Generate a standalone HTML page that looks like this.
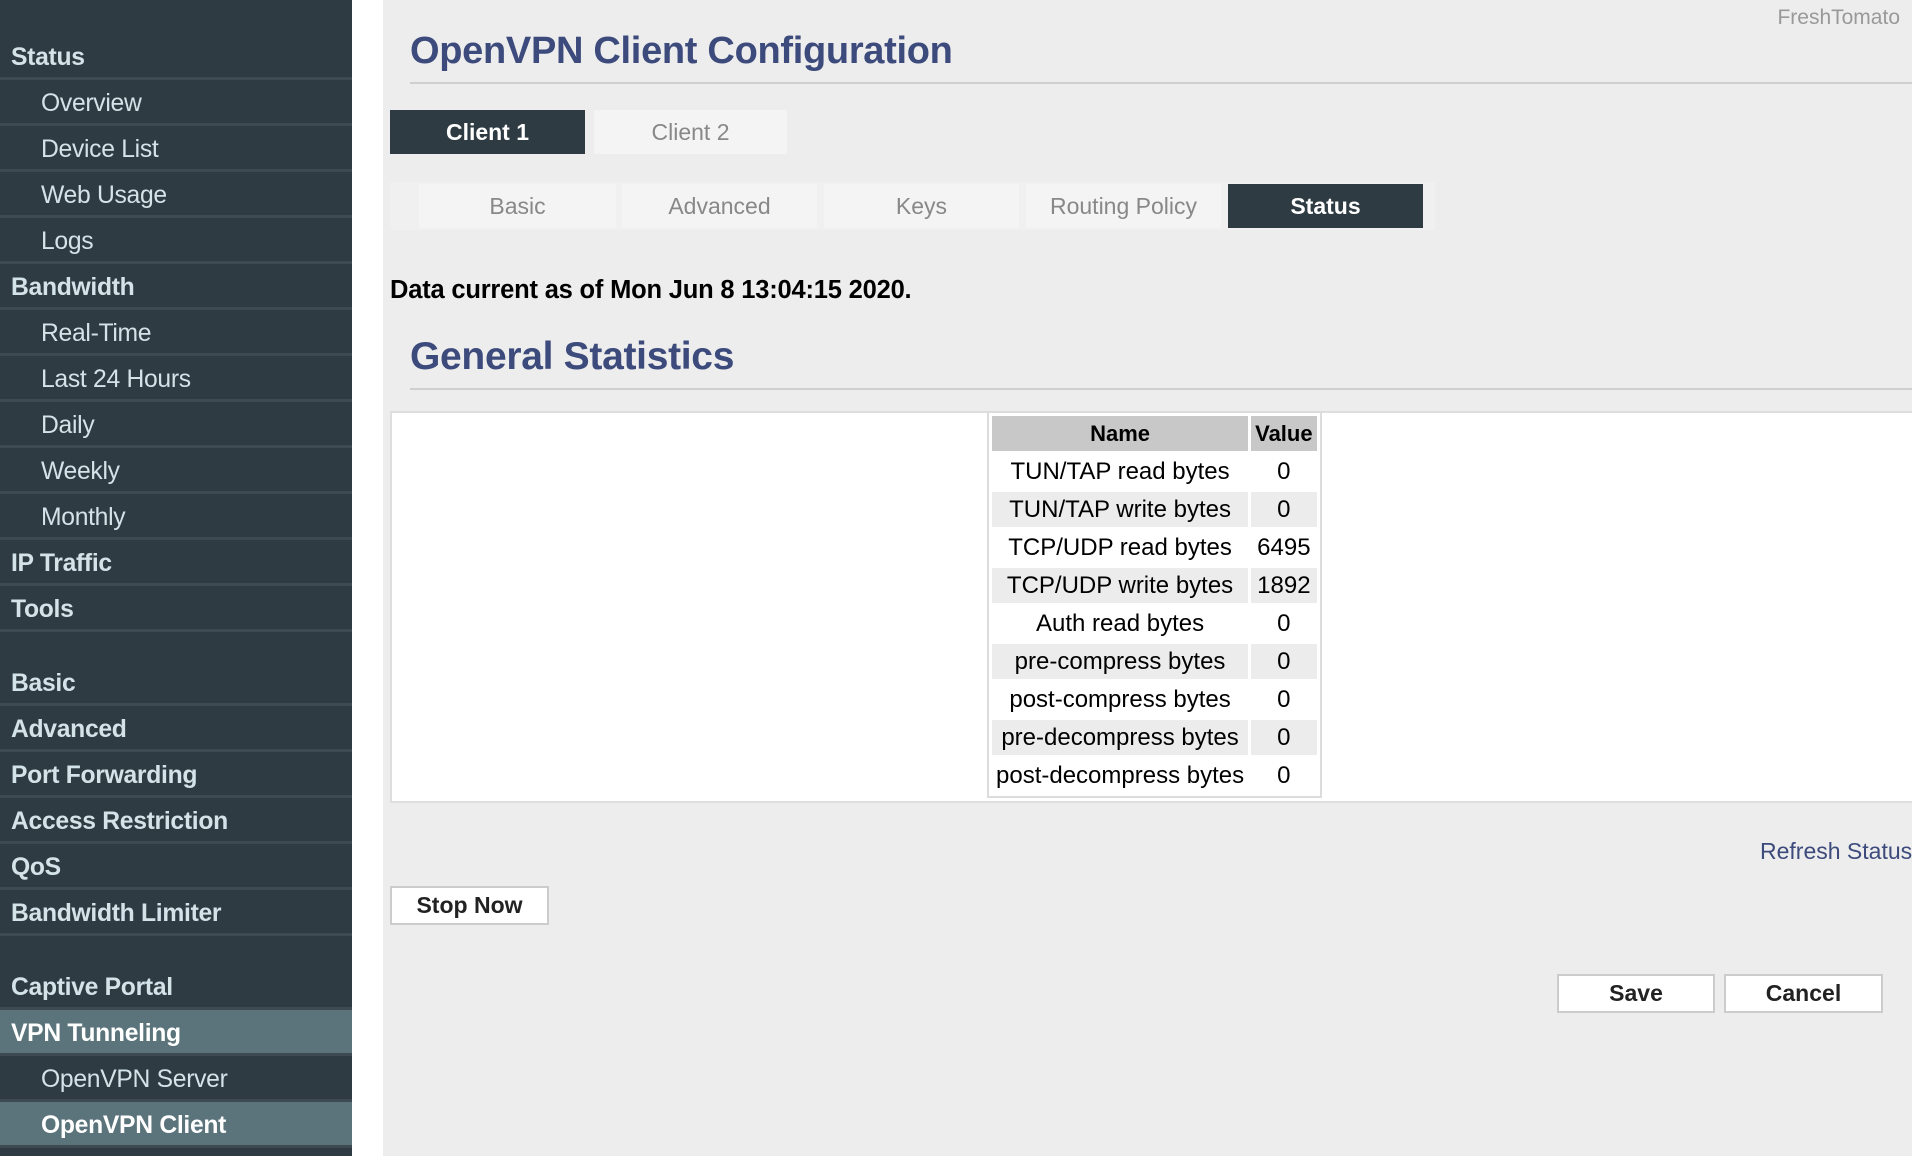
<!DOCTYPE html>
<html><head><meta charset="utf-8"><style>
*{margin:0;padding:0;box-sizing:border-box}
body{width:1912px;height:1156px;background:#fff;font-family:"Liberation Sans",sans-serif;position:relative;overflow:hidden}
#side{position:absolute;left:0;top:0;width:352px;height:1156px;background:#2e3b42}
.r{position:absolute;left:0;width:352px;height:46px;border-bottom:3px solid #3d4a51;color:#d3e3e8;font-size:24.7px;line-height:48px;padding-left:11px;font-weight:bold;letter-spacing:-0.3px}
.r.s{font-weight:normal;padding-left:41px}
.r.h{background:#5b737a;color:#fff}
#main{position:absolute;left:383px;top:0;width:1529px;height:1156px;background:#ededed}
.abs{position:absolute}
h1{position:absolute;left:27px;font-size:38px;color:#3c4a7c;font-weight:bold;letter-spacing:-0.3px}
.line{position:absolute;left:27px;right:0;height:2px;background:#cfcfcf}
.tab{position:absolute;height:44px;line-height:44px;text-align:center;font-size:23px;color:#888;background:#f4f4f4}
.tab.on{background:#2e3b42;color:#fff;font-weight:bold}
table{border-collapse:separate;border-spacing:3px;font-size:24px;color:#000}
td,th{text-align:center;height:35px;padding:0 4px;white-space:nowrap}
th{background:#c8c8c8;font-size:22px}
tr.a td{background:#ececec}
.btn{position:absolute;background:#fff;border:2px solid #ccc;font-weight:bold;font-size:23px;text-align:center;color:#222}
</style></head><body>
<div id="side">
<div class="r" style="top:34px">Status</div>
<div class="r s" style="top:80px">Overview</div>
<div class="r s" style="top:126px">Device List</div>
<div class="r s" style="top:172px">Web Usage</div>
<div class="r s" style="top:218px">Logs</div>
<div class="r" style="top:264px">Bandwidth</div>
<div class="r s" style="top:310px">Real-Time</div>
<div class="r s" style="top:356px">Last 24 Hours</div>
<div class="r s" style="top:402px">Daily</div>
<div class="r s" style="top:448px">Weekly</div>
<div class="r s" style="top:494px">Monthly</div>
<div class="r" style="top:540px">IP Traffic</div>
<div class="r" style="top:586px">Tools</div>
<div class="r" style="top:660px">Basic</div>
<div class="r" style="top:706px">Advanced</div>
<div class="r" style="top:752px">Port Forwarding</div>
<div class="r" style="top:798px">Access Restriction</div>
<div class="r" style="top:844px">QoS</div>
<div class="r" style="top:890px">Bandwidth Limiter</div>
<div class="r" style="top:964px">Captive Portal</div>
<div class="r h" style="top:1010px">VPN Tunneling</div>
<div class="r s" style="top:1056px">OpenVPN Server</div>
<div class="r s h" style="top:1102px;font-weight:bold">OpenVPN Client</div>
</div>
<div id="main">
<div class="abs" style="right:12px;top:6px;font-size:21px;color:#999">FreshTomato</div>
<h1 style="top:30px">OpenVPN Client Configuration</h1>
<div class="line" style="top:82px"></div>
<div class="tab on" style="left:7px;top:110px;width:195px">Client 1</div>
<div class="tab" style="left:211px;top:110px;width:193px">Client 2</div>
<div class="abs" style="left:7px;top:182px;width:1045px;height:48px;background:#f0f0f0"></div>
<div class="tab" style="left:36px;top:184px;width:197px">Basic</div>
<div class="tab" style="left:239px;top:184px;width:195px">Advanced</div>
<div class="tab" style="left:441px;top:184px;width:195px">Keys</div>
<div class="tab" style="left:643px;top:184px;width:195px">Routing Policy</div>
<div class="tab on" style="left:845px;top:184px;width:195px">Status</div>
<div class="abs" style="left:7px;top:276px;font-size:25.5px;font-weight:bold;color:#000;letter-spacing:-0.2px">Data current as of Mon Jun 8 13:04:15 2020.</div>
<h1 style="top:335px;font-size:39px">General Statistics</h1>
<div class="line" style="top:388px"></div>
<div class="abs" style="left:7px;top:411px;width:1530px;height:392px;background:#fff;border:2px solid #dedede"></div>
<div class="abs" style="left:604px;top:411px;border:2px solid #dcdcdc;background:#fff">
<table>
<tr><th style="width:256px">Name</th><th style="width:65px">Value</th></tr>
<tr><td>TUN/TAP read bytes</td><td>0</td></tr>
<tr class="a"><td>TUN/TAP write bytes</td><td>0</td></tr>
<tr><td>TCP/UDP read bytes</td><td>6495</td></tr>
<tr class="a"><td>TCP/UDP write bytes</td><td>1892</td></tr>
<tr><td>Auth read bytes</td><td>0</td></tr>
<tr class="a"><td>pre-compress bytes</td><td>0</td></tr>
<tr><td>post-compress bytes</td><td>0</td></tr>
<tr class="a"><td>pre-decompress bytes</td><td>0</td></tr>
<tr><td>post-decompress bytes</td><td>0</td></tr>
</table></div>
<div class="abs" style="left:1377px;top:838px;font-size:23px;color:#3c4a7c;white-space:nowrap">Refresh Status</div>
<div class="btn" style="left:7px;top:886px;width:159px;height:39px;line-height:35px">Stop Now</div>
<div class="btn" style="left:1174px;top:974px;width:158px;height:39px;line-height:35px">Save</div>
<div class="btn" style="left:1341px;top:974px;width:159px;height:39px;line-height:35px">Cancel</div>
</div>
</body></html>
